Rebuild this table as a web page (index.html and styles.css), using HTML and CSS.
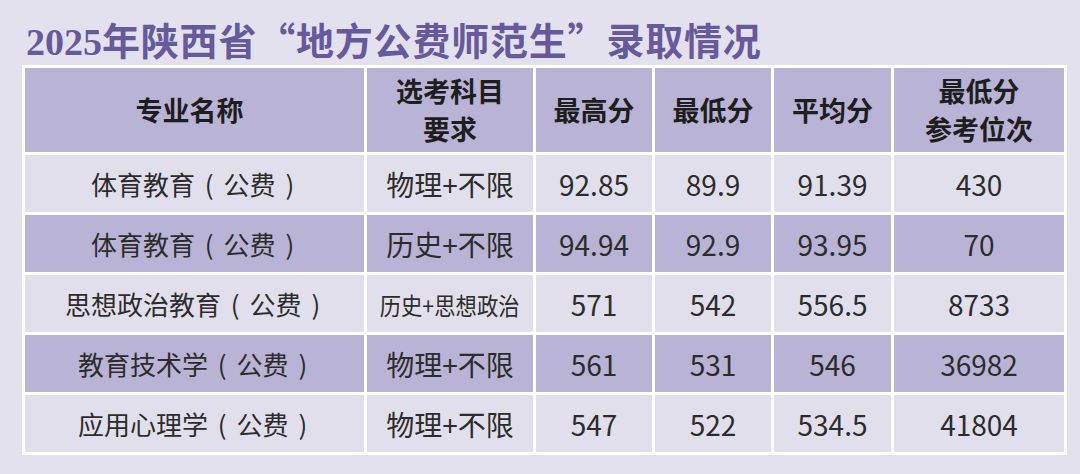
FILE: index.html
```html
<!DOCTYPE html>
<html lang="zh-CN">
<head>
<meta charset="utf-8">
<title>2025年陕西省“地方公费师范生”录取情况</title>
<link rel="stylesheet" href="styles.css">
</head>
<body>
<div class="page">
  <h1 class="title"><span class="num">2025</span>年陕西省“地方公费师范生”录取情况</h1>
  <table class="grid">
    <colgroup>
      <col class="c1"><col class="c2"><col class="c3"><col class="c4"><col class="c5"><col class="c6">
    </colgroup>
    <thead>
      <tr class="head">
        <th class="h1">专业名称</th>
        <th>选考科目<br>要求</th>
        <th>最高分</th>
        <th>最低分</th>
        <th>平均分</th>
        <th>最低分<br>参考位次</th>
      </tr>
    </thead>
    <tbody>
      <tr class="light">
        <td class="name">体育教育<span class="pw">(</span>公费<span class="pw">)</span></td><td>物理+不限</td><td>92.85</td><td>89.9</td><td>91.39</td><td>430</td>
      </tr>
      <tr class="dark">
        <td class="name">体育教育<span class="pw">(</span>公费<span class="pw">)</span></td><td>历史+不限</td><td>94.94</td><td>92.9</td><td>93.95</td><td>70</td>
      </tr>
      <tr class="light">
        <td class="name">思想政治教育<span class="pw">(</span>公费<span class="pw">)</span></td><td><span class="squeeze">历史+思想政治</span></td><td>571</td><td>542</td><td>556.5</td><td>8733</td>
      </tr>
      <tr class="dark">
        <td class="name">教育技术学<span class="pw">(</span>公费<span class="pw">)</span></td><td>物理+不限</td><td>561</td><td>531</td><td>546</td><td>36982</td>
      </tr>
      <tr class="light">
        <td class="name">应用心理学<span class="pw">(</span>公费<span class="pw">)</span></td><td>物理+不限</td><td>547</td><td>522</td><td>534.5</td><td>41804</td>
      </tr>
    </tbody>
  </table>
</div>
</body>
</html>
```
FILE: styles.css
```css
html, body {
  margin: 0;
  padding: 0;
  background: #e4e1ee;
}
.page {
  width: 1080px;
  height: 474px;
  padding: 16px 0 0 22px;
  box-sizing: border-box;
  font-family: "Noto Sans CJK SC", "Noto Sans", sans-serif;
}
.title {
  margin: 0 0 0 4px;
  font-family: "Noto Sans CJK SC", sans-serif;
  font-weight: 700;
  font-size: 38px;
  line-height: 46px;
  color: #665a9c;
  letter-spacing: 0.8px;
  white-space: nowrap;
}
.title .num {
  font-family: "Liberation Serif", serif;
  font-weight: 700;
  letter-spacing: 0;
}
.grid {
  table-layout: fixed;
  width: 1045px;
  border-collapse: separate;
  border-spacing: 3px;
  background: #ffffff;
}
.c1 { width: 339px; }
.c2 { width: 166px; }
.c3 { width: 116px; }
.c4 { width: 116px; }
.c5 { width: 117px; }
.c6 { width: 170px; }
.grid th, .grid td {
  padding: 0;
  text-align: center;
  vertical-align: middle;
  white-space: nowrap;
}
.head th {
  height: 84px;
  background: #b9b3d6;
  font-weight: 700;
  font-size: 27px;
  line-height: 38px;
  color: #1e1e1e;
}
.head th.h1 {
  padding-right: 10px;
}
.grid td {
  height: 57px;
  font-size: 28px;
  line-height: 34px;
  color: #2c2c2c;
}
.grid td.name {
  font-size: 26px;
  padding-left: 6px;
}
.pw {
  display: inline-block;
  width: 1.1em;
  text-align: center;
}
.squeeze {
  display: inline-block;
  font-size: 24px;
  transform: scaleX(0.89);
}
.light td { background: #e2dfec; }
.dark td { background: #b9b3d6; }
```
